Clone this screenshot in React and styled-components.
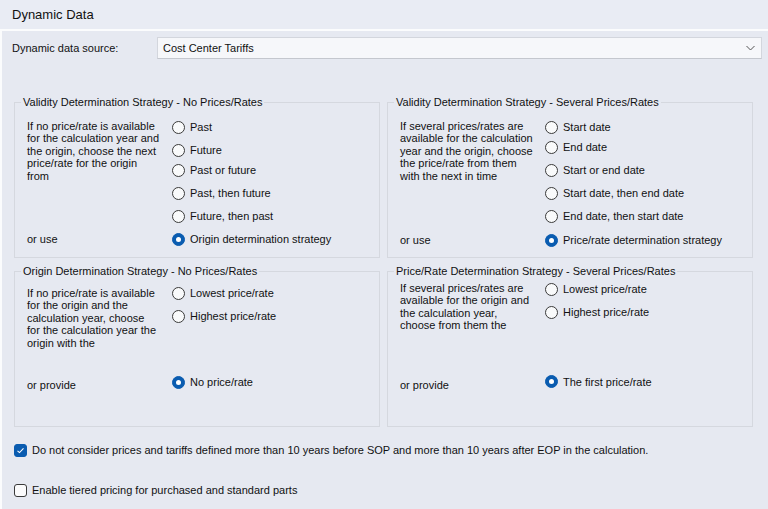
import React from 'react';
import styled, { createGlobalStyle } from 'styled-components';

const GlobalStyle = createGlobalStyle`
  html, body {
    margin: 0;
    padding: 0;
    background: #e6e9f1;
  }
  body {
    font-family: "Liberation Sans", Arial, sans-serif;
    font-size: 11px;
    color: #111;
  }
`;

const Page = styled.div`
  width: 768px;
  height: 509px;
  overflow: hidden;
  display: flex;
  flex-direction: column;
`;

const Header = styled.header`
  height: 29px;
  display: flex;
  align-items: center;
  padding-left: 12px;
  background: #e9ecf4;
  border-bottom: 2px solid #fbfcfd;
  font-size: 13px;
  color: #111;
`;

const Content = styled.div`
  flex: 1;
  border-left: 2px solid #fbfcfd;
  padding: 6px 6px 0 10px;
  display: flex;
  flex-direction: column;
`;

const SourceRow = styled.div`
  display: flex;
  align-items: center;
`;

const SourceLabel = styled.div`
  width: 145px;
`;

const Combo = styled.div`
  flex: 1;
  height: 20px;
  display: flex;
  align-items: center;
  justify-content: space-between;
  padding: 0 6px 0 5px;
  background: #f6f7fa;
  border: 1px solid #d3d6dd;
  border-bottom-color: #c4c7ce;
`;

const Groups = styled.div`
  margin: 37px 9px 0 2px;
  display: grid;
  grid-template-columns: 1fr 1fr;
  column-gap: 7px;
  row-gap: 7px;
`;

const Group = styled.fieldset`
  margin: 0;
  height: 162px;
  box-sizing: border-box;
  border: 1px solid #d5d8df;
  padding: ${(p) => p.$pad}px 0 0 0;
  min-width: 0;
`;

const Legend = styled.legend`
  margin-left: 6px;
  padding: 0 2px;
  line-height: 13px;
`;

const Body = styled.div`
  display: grid;
  grid-template-columns: 145px 1fr;
  padding-left: 12px;
`;

const Description = styled.div`
  white-space: pre-line;
  line-height: 12.4px;
  margin-top: ${(p) => p.$mt}px;
`;

const Options = styled.div`
  display: flex;
  flex-direction: column;
`;

const OptionRow = styled.label`
  height: 16px;
  display: flex;
  align-items: center;
  gap: 5px;
  margin-top: ${(p) => p.$mt || 0}px;
  white-space: nowrap;
`;

const FooterLabel = styled.div`
  margin-top: ${(p) => p.$mt}px;
  height: 16px;
  display: flex;
  align-items: center;
  transform: translateY(${(p) => p.$dy || 0}px);
`;

const Circle = styled.span`
  width: 13px;
  height: 13px;
  box-sizing: border-box;
  border-radius: 50%;
  border: 1px solid ${(p) => (p.$on ? '#0a5cb0' : '#3a3a3a')};
  background: ${(p) => (p.$on ? '#0a5cb0' : '#f9fafb')};
  display: flex;
  align-items: center;
  justify-content: center;
  flex-shrink: 0;

  &::after {
    content: '';
    display: ${(p) => (p.$on ? 'block' : 'none')};
    width: 5px;
    height: 5px;
    border-radius: 50%;
    background: #fff;
  }
`;

const Box = styled.span`
  width: 13px;
  height: 13px;
  box-sizing: border-box;
  border-radius: 3px;
  border: 1px solid ${(p) => (p.$on ? '#0a5cb0' : '#3a3a3a')};
  background: ${(p) => (p.$on ? '#0a5cb0' : '#fbfbfc')};
  display: flex;
  align-items: center;
  justify-content: center;
  flex-shrink: 0;
`;

const CheckRow = styled.label`
  margin: ${(p) => p.$mt}px 0 0 2px;
  height: 16px;
  display: flex;
  align-items: center;
  gap: 5px;
`;

function Radio({ on, label, mt }) {
  return (
    <OptionRow $mt={mt}>
      <Circle $on={on} />
      {label}
    </OptionRow>
  );
}

function Check({ on, label, mt }) {
  return (
    <CheckRow $mt={mt}>
      <Box $on={on}>
        {on && (
          <svg width="9" height="9" viewBox="0 0 9 9">
            <polyline points="1.5,4.8 3.5,6.6 7.5,2.4" fill="none" stroke="#fff" strokeWidth="1.1" />
          </svg>
        )}
      </Box>
      {label}
    </CheckRow>
  );
}

const groups = [
  {
    title: 'Validity Determination Strategy - No Prices/Rates',
    pad: 10,
    descMt: 1,
    text: 'If no price/rate  is available\nfor the calculation year and\nthe origin, choose the next\nprice/rate for the origin\nfrom',
    options: [
      ['Past', 0],
      ['Future', 7],
      ['Past or future', 4],
      ['Past, then future', 7],
      ['Future, then past', 7],
    ],
    footer: 'or use',
    footerOption: 'Origin determination strategy',
    footerMt: 7,
    footerDy: 0,
  },
  {
    title: 'Validity Determination Strategy - Several Prices/Rates',
    pad: 10,
    descMt: 1,
    text: 'If several prices/rates are\navailable for the calculation\nyear and the origin, choose\nthe price/rate from them\nwith the next in time',
    options: [
      ['Start date', 0],
      ['End date', 4],
      ['Start or end date', 7],
      ['Start date, then end date', 7],
      ['End date, then start date', 7],
    ],
    footer: 'or use',
    footerOption: 'Price/rate determination strategy',
    footerMt: 8,
    footerDy: 0,
  },
  {
    title: 'Origin Determination Strategy - No Prices/Rates',
    pad: 7,
    descMt: 2,
    text: 'If no price/rate is available\nfor the origin and the\ncalculation year, choose\nfor the calculation year the\norigin with the',
    options: [
      ['Lowest price/rate', 0],
      ['Highest price/rate', 7],
    ],
    footer: 'or provide',
    footerOption: 'No price/rate',
    footerMt: 25,
    footerDy: 3,
  },
  {
    title: 'Price/Rate Determination Strategy - Several Prices/Rates',
    pad: 3,
    descMt: 1,
    text: 'If several prices/rates are\navailable for the origin and\nthe calculation year,\nchoose from them the',
    options: [
      ['Lowest price/rate', 0],
      ['Highest price/rate', 7],
    ],
    footer: 'or provide',
    footerOption: 'The first price/rate',
    footerMt: 42,
    footerDy: 3,
  },
];

function StrategyGroup({ g }) {
  return (
    <Group $pad={g.pad}>
      <Legend>{g.title}</Legend>
      <Body>
        <Description $mt={g.descMt}>{g.text}</Description>
        <Options>
          {g.options.map(([label, mt]) => (
            <Radio key={label} label={label} mt={mt} />
          ))}
        </Options>
        <FooterLabel $mt={g.footerMt} $dy={g.footerDy}>{g.footer}</FooterLabel>
        <Options>
          <Radio on label={g.footerOption} mt={g.footerMt} />
        </Options>
      </Body>
    </Group>
  );
}

export default function App() {
  return (
    <Page>
      <GlobalStyle />
      <Header>Dynamic Data</Header>
      <Content>
        <SourceRow>
          <SourceLabel>Dynamic data source:</SourceLabel>
          <Combo>
            <span>Cost Center Tariffs</span>
            <svg width="9" height="6" viewBox="0 0 9 6">
              <polyline points="0.5,1 4.5,5 8.5,1" fill="none" stroke="#555" strokeWidth="1" />
            </svg>
          </Combo>
        </SourceRow>
        <Groups>
          {groups.map((g) => (
            <StrategyGroup key={g.title} g={g} />
          ))}
        </Groups>
        <Check
          on
          mt={15}
          label="Do not consider prices and tariffs defined more than 10 years before SOP and more than 10 years after EOP in the calculation."
        />
        <Check mt={24} label="Enable tiered pricing for purchased and standard parts" />
      </Content>
    </Page>
  );
}
